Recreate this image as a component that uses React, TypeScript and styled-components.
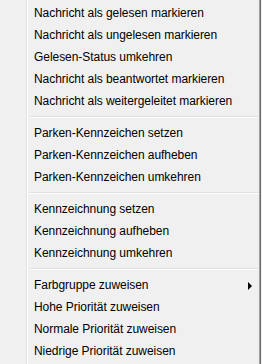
import React from 'react'
import styled, { createGlobalStyle } from 'styled-components'

const GlobalStyle = createGlobalStyle`
  html, body {
    margin: 0;
    padding: 0;
    background: #f0f0f0;
  }
`

const Menu = styled.div`
  width: 260px;
  height: 364px;
  box-sizing: border-box;
  padding-top: 2px;
  background-color: #f0f0f0;
  background-image: linear-gradient(
    to right,
    transparent 26px,
    #e2e3e3 26px,
    #e2e3e3 27px,
    #ffffff 27px,
    #ffffff 28px,
    transparent 28px
  );
  border-right: 1px solid #a0a0a0;
  box-shadow: 1px 0 0 #6e6e6e;
  font-family: 'Liberation Sans', Arial, sans-serif;
  font-size: 12px;
  letter-spacing: -0.05px;
  color: #000000;
`

const Item = styled.div`
  height: 22px;
  display: flex;
  align-items: center;
  padding-left: 34px;
  padding-right: 7px;
  white-space: nowrap;
  cursor: default;
`

const Label = styled.span`
  flex: 1;
`

const Arrow = styled.span`
  width: 0;
  height: 0;
  border-top: 4px solid transparent;
  border-bottom: 4px solid transparent;
  border-left: 4px solid #000000;
  margin-top: 2px;
`

const Separator = styled.div`
  height: 10px;
  display: flex;
  flex-direction: column;
  justify-content: center;
  padding-left: 30px;
  padding-right: 1px;
  &::before {
    content: '';
    display: block;
    height: 1px;
    background: #e0e0e0;
  }
  &::after {
    content: '';
    display: block;
    height: 1px;
    background: #ffffff;
  }
`

const groups: { label: string; sub?: boolean }[][] = [
  [
    { label: 'Nachricht als gelesen markieren' },
    { label: 'Nachricht als ungelesen markieren' },
    { label: 'Gelesen-Status umkehren' },
    { label: 'Nachricht als beantwortet markieren' },
    { label: 'Nachricht als weitergeleitet markieren' },
  ],
  [
    { label: 'Parken-Kennzeichen setzen' },
    { label: 'Parken-Kennzeichen aufheben' },
    { label: 'Parken-Kennzeichen umkehren' },
  ],
  [
    { label: 'Kennzeichnung setzen' },
    { label: 'Kennzeichnung aufheben' },
    { label: 'Kennzeichnung umkehren' },
  ],
  [
    { label: 'Farbgruppe zuweisen', sub: true },
    { label: 'Hohe Priorität zuweisen' },
    { label: 'Normale Priorität zuweisen' },
    { label: 'Niedrige Priorität zuweisen' },
  ],
]

const App: React.FC = () => {
  return (
    <>
      <GlobalStyle />
      <Menu>
        {groups.map((group, gi) => (
          <React.Fragment key={gi}>
            {gi > 0 && <Separator />}
            {group.map((item) => (
              <Item key={item.label}>
                <Label>{item.label}</Label>
                {item.sub && <Arrow />}
              </Item>
            ))}
          </React.Fragment>
        ))}
      </Menu>
    </>
  )
}

export default App
